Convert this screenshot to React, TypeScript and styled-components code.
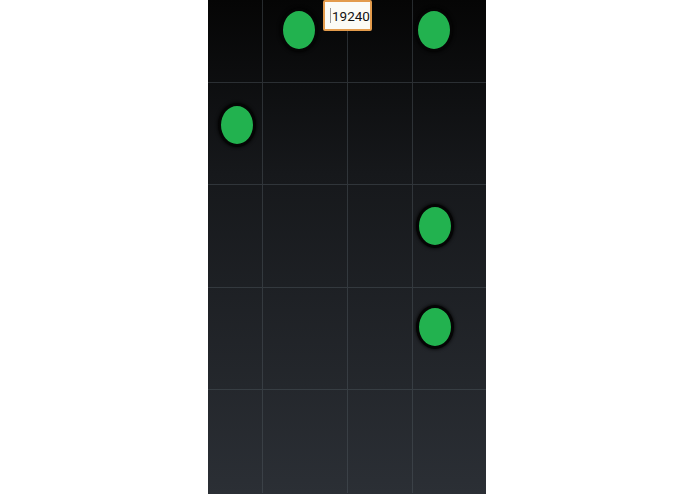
import React from "react";
import styled, { createGlobalStyle } from "styled-components";

const GlobalStyle = createGlobalStyle`
  html, body {
    margin: 0;
    padding: 0;
    background: #ffffff;
    font-family: "Roboto", "Liberation Sans", sans-serif;
  }
`;

const Page = styled.div`
  width: 100%;
  height: 494px;
  display: flex;
  padding-left: 208px;
  box-sizing: border-box;
`;

const Board = styled.div`
  position: relative;
  width: 278px;
  height: 494px;
  overflow: hidden;
  background: linear-gradient(180deg, #050505 0%, #16181b 35%, #2b2f35 100%);
`;

const Grid = styled.div`
  display: grid;
  grid-template-columns: 55px 85px 65px 73px;
  grid-auto-rows: 102.5px;
  margin-top: -20px;
`;

const Cell = styled.div<{ $last: boolean; $bottom: boolean }>`
  box-sizing: border-box;
  border-bottom: ${(p) => (p.$bottom ? "none" : "1.5px solid rgba(80, 88, 96, 0.45)")};
  border-right: ${(p) => (p.$last ? "none" : "1.5px solid rgba(80, 88, 96, 0.45)")};
`;

const Tile = styled.div<{ $x: number; $y: number }>`
  position: absolute;
  left: ${(p) => p.$x - 19}px;
  top: ${(p) => p.$y - 22}px;
  width: 32px;
  height: 38px;
  border: 3px solid #050505;
  border-radius: 50%;
  background: #22b24f;
  box-shadow: 0 0 3px 1px rgba(0, 0, 0, 0.6);
`;

const Score = styled.div`
  position: absolute;
  top: 0;
  left: 115px;
  width: 49px;
  height: 31px;
  box-sizing: border-box;
  border: 2px solid #e39b4c;
  border-radius: 2px;
  background: #fbfbf6;
  display: flex;
  align-items: center;
  padding-left: 5px;
  font-size: 13.5px;
  color: #111;
`;

const Caret = styled.span`
  width: 1px;
  height: 15px;
  background: #9a9a9a;
  margin-right: 1px;
`;

const tiles = [
  { x: 299, y: 30 },
  { x: 434, y: 30 },
  { x: 237, y: 125 },
  { x: 435, y: 226 },
  { x: 435, y: 327 },
];

const App = () => {
  const cells = Array.from({ length: 20 }, (_, i) => i);
  return (
    <Page>
      <GlobalStyle />
      <Board>
        <Grid>
          {cells.map((i) => (
            <Cell key={i} $last={i % 4 === 3} $bottom={i >= 16} />
          ))}
        </Grid>
        {tiles.map((t, i) => (
          <Tile key={i} $x={t.x - 208} $y={t.y} />
        ))}
        <Score>
          <Caret />
          19240
        </Score>
      </Board>
    </Page>
  );
};

export default App;
